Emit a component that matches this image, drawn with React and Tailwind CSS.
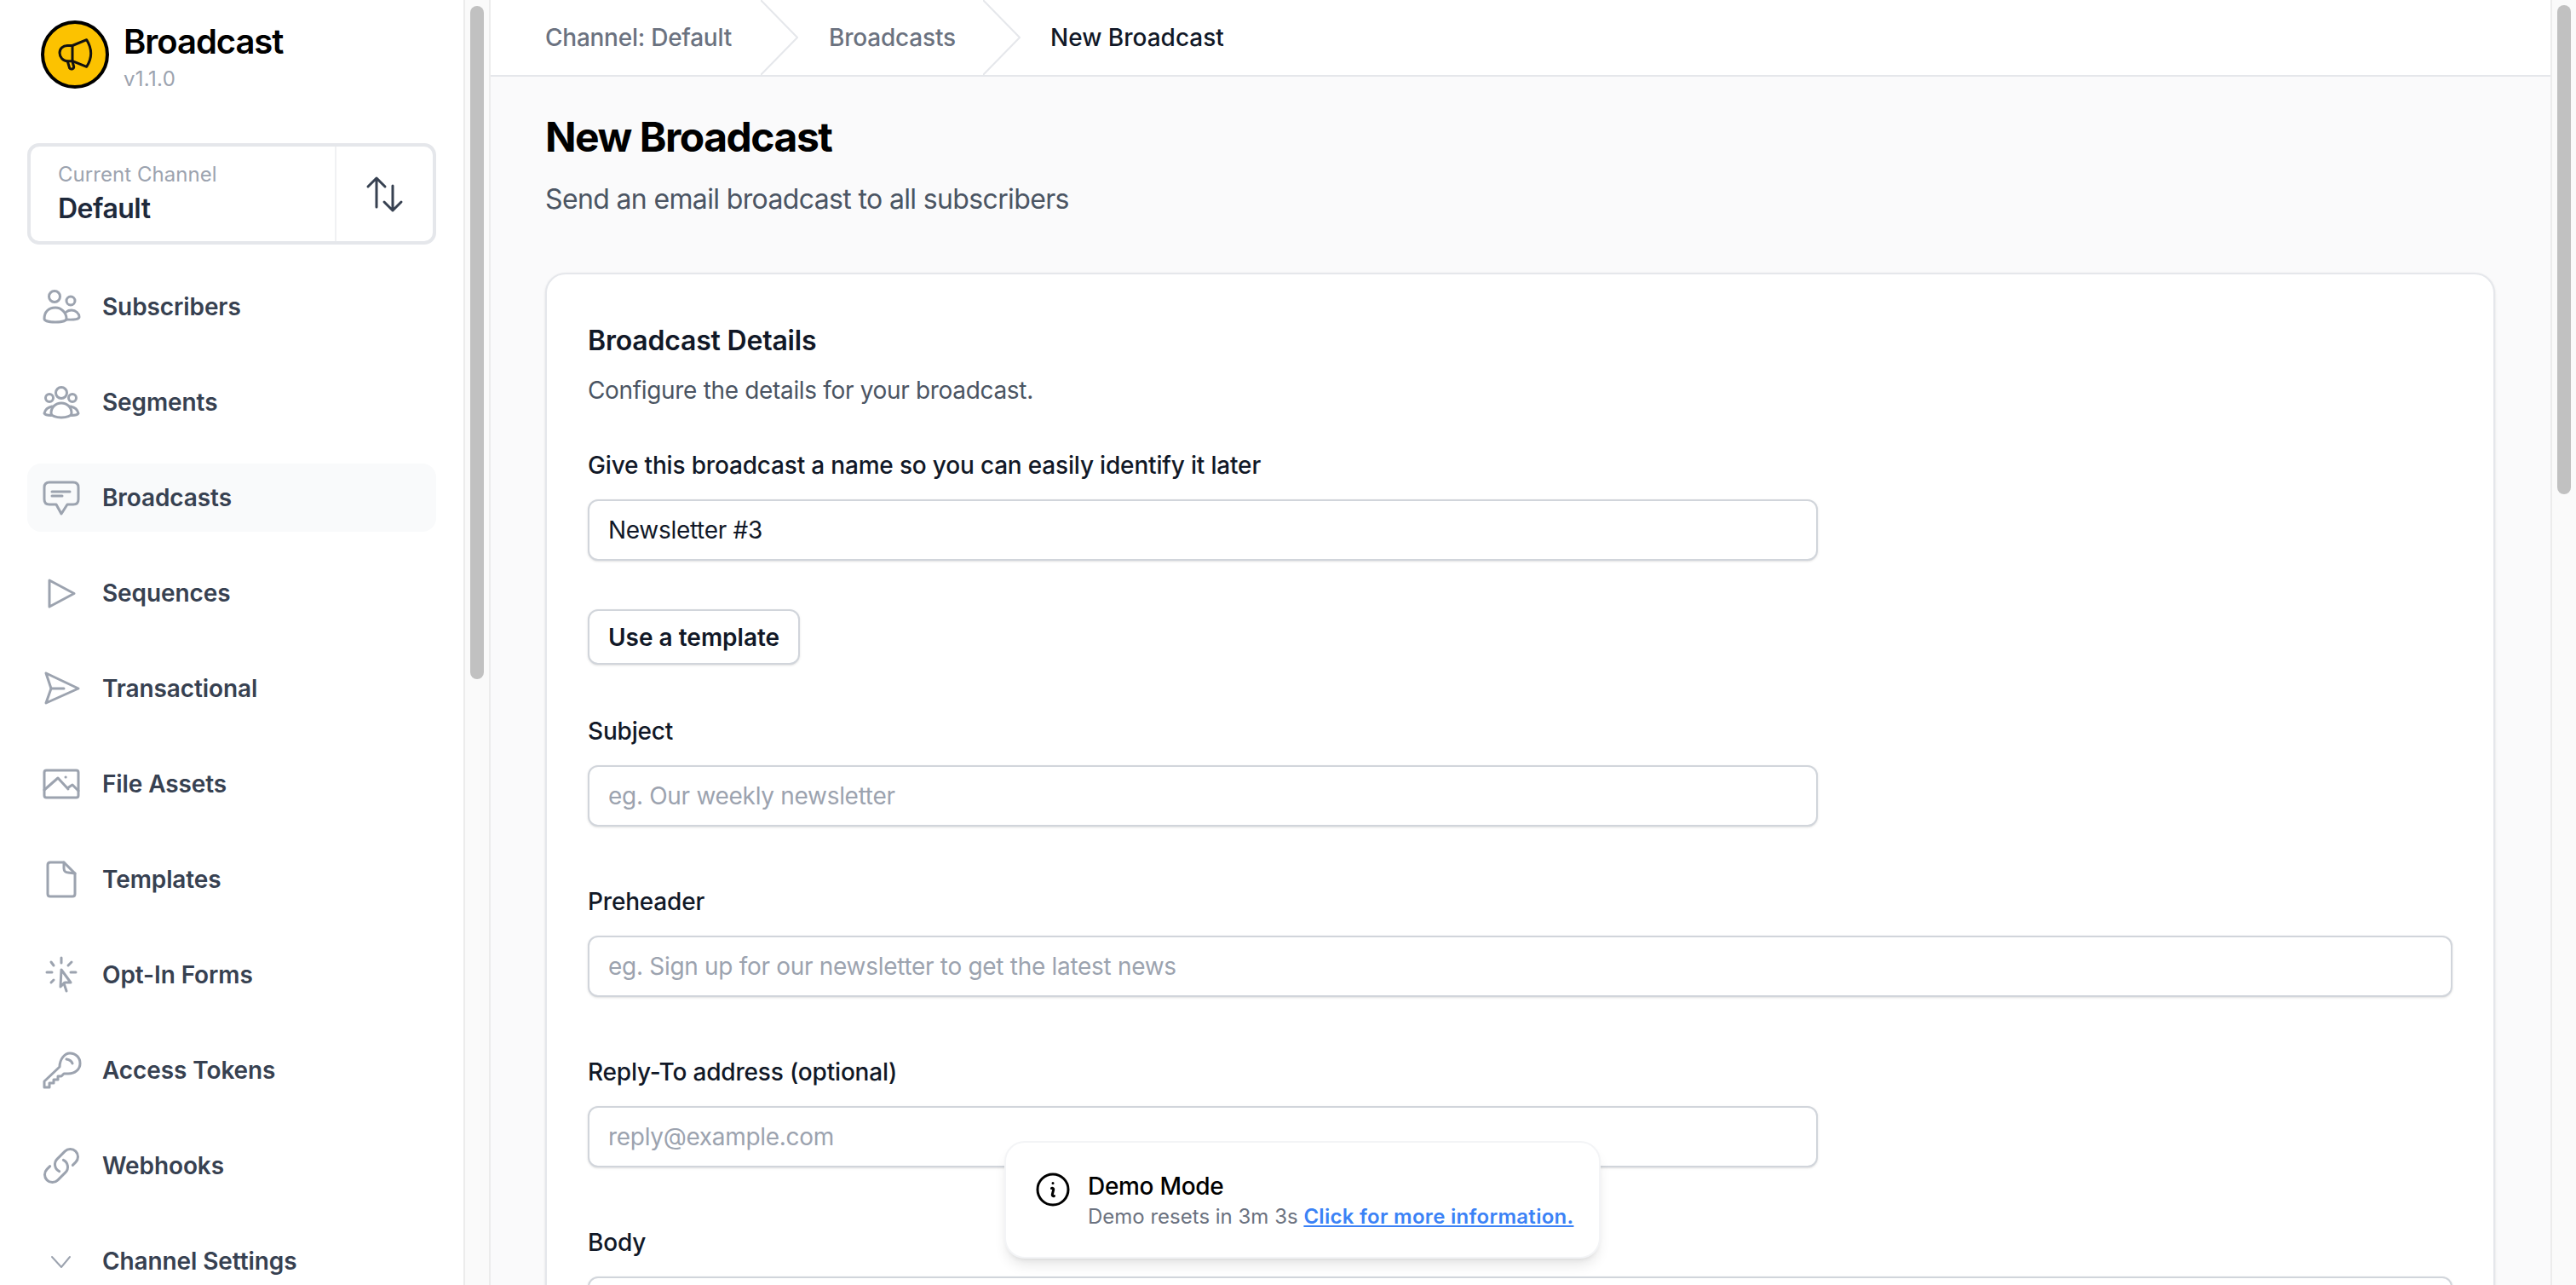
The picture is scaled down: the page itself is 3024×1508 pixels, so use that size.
import React from "react";

const Ico = ({ children, vb = "0 0 48 48", sw = 3 }) => (
  <svg width="48" height="48" viewBox={vb} fill="none" stroke="#9ca3af" strokeWidth={sw} strokeLinecap="round" strokeLinejoin="round" className="shrink-0">
    {children}
  </svg>
);

const nav = [
  ["Subscribers", <Ico><circle cx="16" cy="12" r="6.5" /><circle cx="35" cy="17" r="5" /><path d="M4 38C4 30 9 25 17 25C24 25 30 31 30 38C30 40.500 24 42 17 42C10 42 4 40.500 4 38Z" /><path d="M30 30C31.500 28.500 33.500 28 36 28C41 28 45 32 45 36C45 38.500 40 39.500 30 39" /></Ico>],
  ["Segments", <Ico><circle cx="24" cy="13" r="6.5" /><circle cx="10" cy="19" r="4.500" /><circle cx="37" cy="19" r="4.500" /><path d="M12 37C12 30 17 25 24 25C31 25 36 30 36 37C36 40 30 42 24 42C18 42 12 40 12 37Z" /><path d="M13 29C8 30 5 33 4 37C5 39 8 39.500 12 39.500" /><path d="M35 29C40 30 43 33 44 37C43 39 40 39.500 36 39.500" /></Ico>],
  ["Broadcasts", <Ico><path d="M10 6H38C42 6 44 8 44 12V26C44 30 42 32 38 32H31L24 43L18 32H10C6 32 4 30 4 26V12C4 8 6 6 10 6Z" /><path d="M13 17H34M13 22H25" /></Ico>],
  ["Sequences", <Ico><path d="M10 9L39 24.500L10 40Z" /></Ico>],
  ["Transactional", <Ico><path d="M6 6L44 24L6 41L12 24Z" /><path d="M12 24H27" /></Ico>],
  ["File Assets", <Ico><rect x="4" y="8" width="40" height="32" rx="2.500" /><path d="M4 31L20 17L32 30M31 29L37 25L44 32" /><path d="M29 16H29.200" /></Ico>],
  ["Templates", <Ico><path d="M11 4H27L40 17V41C40 43 39 44 37 44H11C9 44 8 43 8 41V7C8 5 9 4 11 4Z" /><path d="M27 4V11C27 14 29 16 32 16L40 17" /></Ico>],
  ["Opt-In Forms", <Ico><path d="M24 4V10M7 21H13M35 21H41M12 9L15 13M36 9L32 13M12 33L15 30" /><path d="M24 18L23 38L28 33L35 33Z" /><path d="M27 34L30 43" /></Ico>],
  ["Access Tokens", <Ico><path d="M4 44V37L22 20C22 11 28 4 34 4C41 4 46 9 46 16C46 23 40 28 32 28H27L24 31H20V35H15V39H10V44Z" /><path d="M30 11C33 11.500 36 13 37 16" /></Ico>],
  ["Webhooks", <Ico vb="0 0 24 24" sw={1.5}><path d="M13.19 8.688a4.5 4.5 0 0 1 1.242 7.244l-4.5 4.5a4.5 4.5 0 0 1-6.364-6.364l1.757-1.757m13.35-.622 1.757-1.757a4.5 4.5 0 0 0-6.364-6.364l-4.5 4.5a4.5 4.5 0 0 0 1.242 7.244" /></Ico>],
  ["Channel Settings", <Ico sw={2}><path d="M13 19L24 31L34 19" /></Ico>],
];

const Crumb = () => (
  <svg width="44" height="88" viewBox="0 0 44 88" fill="none" stroke="#e5e7eb" strokeWidth="2" className="shrink-0">
    <path d="M0 0L43 44L0 88" />
  </svg>
);

const Field = ({ label, placeholder, defaultValue, wide, className = "" }) => (
  <div className={className}>
    <label className="block text-[28px] leading-[40px] font-medium tracking-[-0.18px] text-[#111827]">{label}</label>
    <input
      readOnly
      placeholder={placeholder}
      defaultValue={defaultValue}
      className={`mt-[20px] block h-[72px] ${wide ? "w-full" : "w-[1444px]"} rounded-[12px] border-2 border-[#d1d5db] bg-white px-[22px] text-[28px] tracking-[-0.3px] text-[#111827] shadow-sm outline-none placeholder:text-[#9ca3af]`}
    />
  </div>
);

export default function App() {
  return (
    <div className="relative flex h-screen w-screen overflow-hidden bg-white font-[Inter,sans-serif]">
      <aside className="flex h-full w-[544px] shrink-0 flex-col overflow-hidden bg-white px-[32px]">
        <div className="mt-[24px] flex h-[80px] items-start gap-[17px] pl-[16px]">
          <svg width="80" height="80" viewBox="0 0 80 80" className="shrink-0">
            <circle cx="40" cy="40" r="38" fill="#fcc200" stroke="#000" strokeWidth="4" />
            <g fill="none" stroke="#111" strokeWidth="3" strokeLinejoin="round" strokeLinecap="round">
              <path d="M37 29.500L53.700 22.700C57 28 58.700 33 58.700 38.700C58.700 44 57 49 53.700 54.300L37 47.700Z" />
              <path d="M37 29.500H31C26 29.500 22 33 22 38C22 43 26 47.700 31 47.700H37" />
              <path d="M31.300 48L33.700 56C35 58 38.700 57 38.700 54.500L37 48" />
            </g>
          </svg>
          <div className="flex flex-col">
            <div className="mt-[1px] text-[40px] leading-[48px] font-semibold tracking-[-1.05px] text-black">Broadcast</div>
            <div className="mt-[4px] text-[24px] leading-[32px] tracking-[0.3px] text-[#9ca3af]">v1.1.0</div>
          </div>
        </div>
        <div className="mt-[64px] flex h-[119px] w-[480px] shrink-0 rounded-[14px] border-[4px] border-[#e5e7eb] bg-white">
          <div className="flex w-[359px] flex-col justify-center border-r-2 border-[#f0f1f3] pl-[32px]">
            <div className="text-[24px] leading-[32px] tracking-[0.05px] text-[#9ca3af]">Current Channel</div>
            <div className="mt-[2px] text-[32px] leading-[44px] font-semibold tracking-[-0.5px] text-[#1e293b]">Default</div>
          </div>
          <div className="flex flex-1 items-center justify-center">
            <svg width="48" height="48" viewBox="0 0 48 48" fill="none" stroke="#374151" strokeWidth="3" strokeLinecap="round" strokeLinejoin="round">
              <path d="M14 39V5M4 15L14 5L24 15" />
              <path d="M33 14V43M23 33L33 43L43 33" />
            </svg>
          </div>
        </div>
        <nav className="mt-[33px] flex flex-col gap-[32px]">
          {nav.map(([label, icon]) => (
            <div key={label} className={`flex h-[80px] shrink-0 items-center gap-[24px] rounded-[16px] pl-[16px] ${label === "Broadcasts" ? "bg-[#f9fafb]" : ""}`}>
              {icon}
              <span className="text-[28px] font-semibold tracking-[-0.1px] text-[#374151]">{label}</span>
            </div>
          ))}
        </nav>
      </aside>

      <div className="h-full w-[32px] shrink-0 border-x-2 border-x-[#ececec] bg-[#fafafa] px-[6px] pt-[7px]">
        <div className="h-[790px] w-[16px] rounded-full bg-[#c1c1c1]" />
      </div>

      <main className="flex h-full min-w-0 flex-1 flex-col overflow-hidden bg-[#fafafb]">
        <header className="flex h-[90px] shrink-0 items-center border-b-2 border-[#e5e7eb] bg-white pl-[64px] text-[28px] font-medium text-[#6b7280]">
          <span className="w-[253px] tracking-[-0.25px]">Channel: Default</span>
          <Crumb />
          <span className="ml-[36px] w-[181px] tracking-[-0.2px]">Broadcasts</span>
          <Crumb />
          <span className="ml-[35px] text-[#111827]">New Broadcast</span>
        </header>
        <div className="pl-[64px] pr-[65px]">
          <h1 className="mt-[43px] text-[48px] leading-[56px] font-bold tracking-[-1.5px] text-black">New Broadcast</h1>
          <p className="mt-[23px] text-[32px] leading-[44px] tracking-[-0.64px] text-[#4b5563]">Send an email broadcast to all subscribers</p>
          <section className="mt-[64px] rounded-[24px] border-2 border-[#e5e7eb] bg-white pl-[48px] pr-[48px] pt-[58px] shadow-sm">
            <h2 className="text-[32px] leading-[40px] font-semibold tracking-[-0.2px] text-[#111827]">Broadcast Details</h2>
            <p className="mt-[18px] text-[28px] leading-[40px] tracking-[-0.33px] text-[#4b5563]">Configure the details for your broadcast.</p>
            <Field className="mt-[48px]" label="Give this broadcast a name so you can easily identify it later" defaultValue="Newsletter #3" />
            <button className="mt-[57px] block h-[65px] rounded-[12px] border-2 border-[#d1d5db] bg-white px-[22px] text-[28px] font-semibold text-[#111827] shadow-sm">Use a template</button>
            <Field className="mt-[58px]" label="Subject" placeholder="eg. Our weekly newsletter" />
            <Field className="mt-[68px]" wide label="Preheader" placeholder="eg. Sign up for our newsletter to get the latest news" />
            <Field className="mt-[68px]" label="Reply-To address (optional)" placeholder="reply@example.com" />
            <Field className="mt-[68px]" wide label="Body" />
          </section>
        </div>
      </main>

      <div className="h-full w-[30px] shrink-0 border-l-2 border-[#ececec] bg-[#fafafa] px-[6px] pt-[6px]">
        <div className="h-[574px] w-[16px] rounded-full bg-[#c1c1c1]" />
      </div>

      <div className="absolute left-[1179px] top-[1339px] flex h-[138px] w-[700px] rounded-[24px] border-2 border-[#f3f4f6] bg-white pl-[31px] pt-[31px] shadow-lg">
        <svg width="48" height="48" viewBox="0 0 24 24" fill="none" stroke="#000" strokeWidth="1.5" strokeLinecap="round" strokeLinejoin="round" className="shrink-0">
          <path d="m11.25 11.250.041-.02a.75.75 0 0 1 1.063.852l-.708 2.836a.75.75 0 0 0 1.063.853l.041-.021M21 12a9 9 0 1 1-18 0 9 9 0 0 1 18 0Zm-9-3.750h.008v.008H12V8.250Z" />
        </svg>
        <div className="ml-[17px]">
          <div className="text-[28px] leading-[40px] font-medium tracking-[-0.3px] text-black">Demo Mode</div>
          <div className="text-[24px] leading-[32px] text-[#6b7280]">
            Demo resets in 3m 3s <a className="font-semibold tracking-[0.28px] text-[#3b82f6] underline">Click for more information.</a>
          </div>
        </div>
      </div>
    </div>
  );
}
